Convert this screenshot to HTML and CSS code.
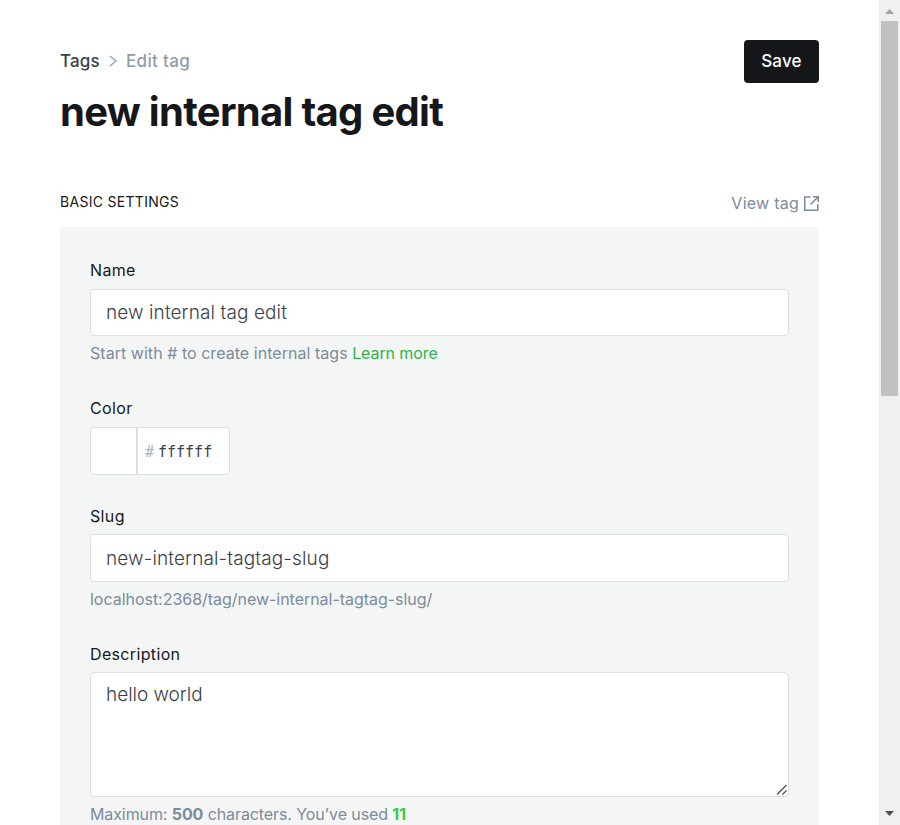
FILE: index.html
```html
<!DOCTYPE html>
<html lang="en">
<head>
<meta charset="utf-8">
<title>Edit tag</title>
<link rel="stylesheet" href="styles.css">
</head>
<body>
<div class="viewport">
  <main class="content">
    <header class="header">
      <div>
        <nav class="breadcrumb">
          <a class="crumb-link">Tags</a>
          <svg class="crumb-arrow" width="8" height="12" viewBox="0 0 8 12"><path d="M1 1l6 5-6 5"/></svg>
          <span class="crumb-current">Edit tag</span>
        </nav>
        <h1 class="title">new internal tag edit</h1>
      </div>
      <button class="save">Save</button>
    </header>
    <div class="section-head">
      <h4 class="section-title">Basic settings</h4>
      <a class="view"><span class="view-text">View tag</span>
        <svg width="15" height="15" viewBox="0 0 15 15"><path d="M6.5 1H.75v13.25h13V8M9 .75h5.25V6M14.25.75L6.5 8.5"/></svg>
      </a>
    </div>
    <section class="panel">
      <div class="group name">
        <label class="label" for="name">Name</label>
        <input class="input" id="name" value="new internal tag edit">
        <p class="hint hint-name">Start with # to create internal tags <a class="learn">Learn more</a></p>
      </div>
      <div class="group color">
        <label class="label" for="color">Color</label>
        <div class="color-box">
          <div class="swatch"></div>
          <span class="hash">#</span>
          <input class="hex" id="color" value="ffffff">
        </div>
      </div>
      <div class="group slug">
        <label class="label short" for="slug">Slug</label>
        <input class="input tall" id="slug" value="new-internal-tagtag-slug">
        <p class="hint hint-slug">localhost:2368/tag/new-internal-tagtag-slug/</p>
      </div>
      <div class="group">
        <label class="label short" for="desc">Description</label>
        <div class="area-wrap">
          <textarea class="input area" id="desc">hello world</textarea>
          <svg class="grip" width="12" height="12" viewBox="0 0 12 12"><path d="M1 10.5L10.5 1M6.5 10.5l4-4"/></svg>
        </div>
        <p class="hint hint-desc">Maximum: <b>500</b> characters. You’ve used <b class="count">11</b></p>
      </div>
    </section>
  </main>
  <aside class="scrollbar">
    <svg class="arrow-up" width="9" height="5" viewBox="0 0 9 5"><path d="M4.5 0L9 5H0z"/></svg>
    <div class="thumb"></div>
    <svg class="arrow-down" width="9" height="5" viewBox="0 0 9 5"><path d="M0 0h9L4.5 5z"/></svg>
  </aside>
</div>
</body>
</html>
```
FILE: styles.css
```css
* { box-sizing: border-box; }
body { margin: 0; font-family: Inter, "Liberation Sans", sans-serif; color: #15171a; background: #fff; }
h1, h4, p { margin: 0; }
.viewport { display: flex; height: 825px; overflow: hidden; }
.content { width: 879px; padding: 40px 60px 0; }
.header { display: flex; justify-content: space-between; align-items: flex-start; height: 152px; }
.breadcrumb { display: flex; align-items: center; height: 42px; font-size: 17px; font-weight: 500; letter-spacing: 0.15px; }
.crumb-link { width: 49px; color: #394047; }
.crumb-arrow { width: 8px; margin-right: 9px; fill: none; stroke: #8e9cac; stroke-width: 1.2; }
.crumb-current { color: #8e9cac; letter-spacing: 0.35px; }
.title { font-size: 40px; line-height: 60px; font-weight: 700; letter-spacing: -0.7px; white-space: nowrap; }
.save { width: 75px; height: 43px; padding: 0 0 2px; border: 0; border-radius: 4px; background: #15171a; color: #fff; font: 500 17px Inter, sans-serif; letter-spacing: 0.2px; }
.section-head { display: flex; justify-content: space-between; height: 35px; }
.section-title { font-size: 14px; line-height: 20px; font-weight: 400; letter-spacing: 0.3px; text-transform: uppercase; }
.view { display: flex; align-items: center; gap: 5px; height: 23px; color: #7c8b9a; font-size: 16px; letter-spacing: 0.25px; }
.view-text { padding-bottom: 2px; }
.view svg { fill: none; stroke: #7c8b9a; stroke-width: 1.5; }
.panel { height: 640px; padding: 30px 30px 0; border-radius: 4px; background: #f4f6f6; }
.name { height: 138px; }
.color { height: 108px; }
.slug { height: 138px; }
.label { display: block; height: 32px; font-size: 16px; line-height: 26px; letter-spacing: 0.35px; }
.short { height: 31px; }
.input { display: block; width: 100%; height: 47px; padding: 0 15px; border: 1px solid #dddfe0; border-radius: 4px; background: #fff; color: #394047; font: 300 19px Inter, sans-serif; letter-spacing: 0.1px; outline: 0; }
.tall { height: 48px; letter-spacing: 0.12px; }
.hint { padding-top: 7px; color: #7c8b9a; font-size: 16px; line-height: 20px; font-weight: 400; white-space: nowrap; }
.hint-name { letter-spacing: 0.04px; }
.hint-slug { letter-spacing: -0.03px; }
.hint-desc { letter-spacing: -0.1px; }
.learn { color: #30b24f; letter-spacing: -0.1px; }
.count { color: #30cf43; }
.color-box { display: flex; align-items: center; width: 140px; height: 48px; border: 1px solid #dddfe0; border-radius: 4px; background: #fff; overflow: hidden; }
.swatch { width: 47px; height: 100%; border-right: 2px solid #dddfe0; }
.hash { width: 20px; padding: 1px 0 0 7px; color: #abb4be; font: 15px "DejaVu Sans Mono", monospace; }
.hex { width: 65px; padding: 1px 0 0; border: 0; outline: 0; background: none; color: #394047; font: 15px "DejaVu Sans Mono", monospace; }
.area-wrap { position: relative; }
.area { height: 125px; padding: 7px 15px; line-height: 29px; letter-spacing: -0.03px; resize: none; overflow: hidden; }
.grip { position: absolute; right: 1px; bottom: 1px; fill: none; stroke: #505050; stroke-width: 1.3; }
.scrollbar { display: flex; flex-direction: column; align-items: center; width: 21px; height: 825px; background: #f0f0f0; }
.arrow-up { margin: 9px 0 7px; fill: #a3a3a3; }
.thumb { width: 17px; height: 375px; background: #c1c1c1; }
.arrow-down { margin: auto 0 9px; fill: #505050; }
```
